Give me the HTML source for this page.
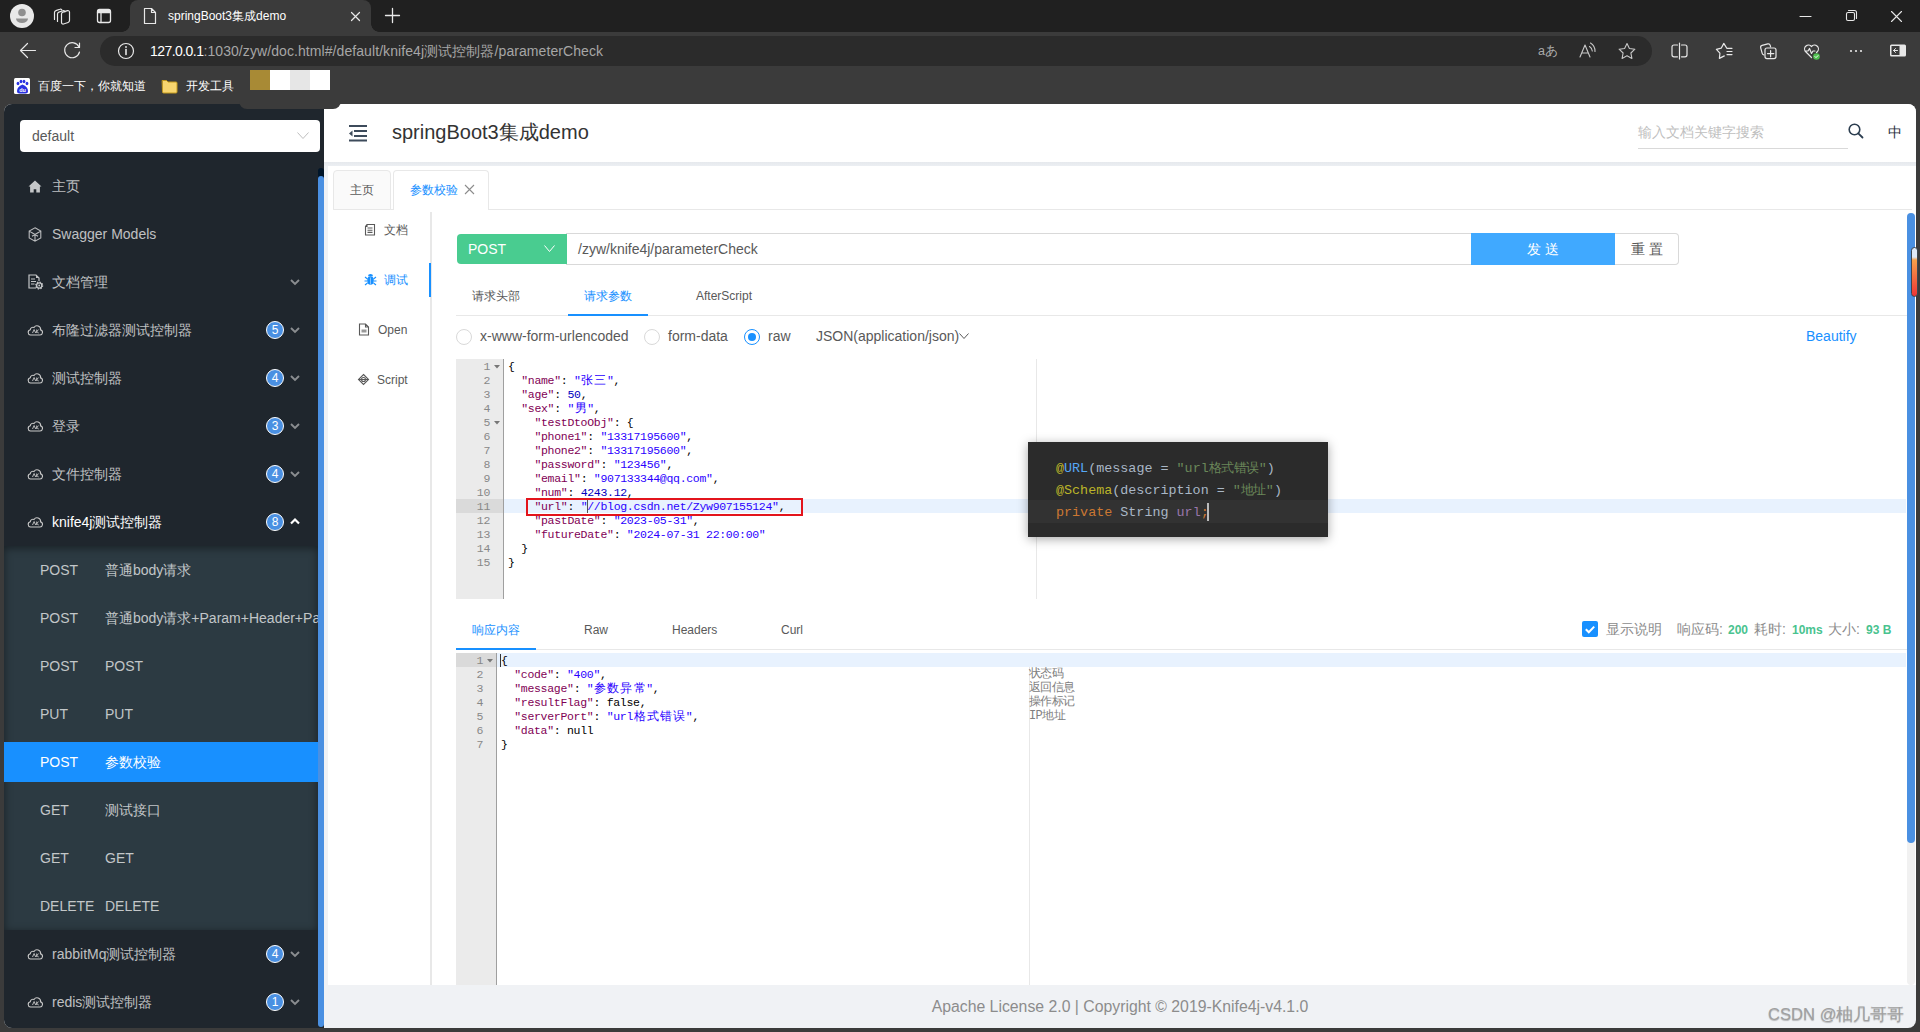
<!DOCTYPE html><html><head><meta charset="utf-8"><style>*{box-sizing:border-box;margin:0;padding:0}
html,body{width:1920px;height:1032px;overflow:hidden;background:#3b3b3b;font-family:"Liberation Sans",sans-serif;position:relative}
.a{position:absolute}
.mono{font-family:"Liberation Mono",monospace}
svg{position:absolute;overflow:visible}
.nw{white-space:nowrap}
/* browser chrome */
#tabstrip{left:0;top:0;width:1920px;height:32px;background:#202020}
#acttab{left:130px;top:0;width:241px;height:32px;background:#3b3b3b;border-radius:8px 8px 0 0}
#acttab:before,#acttab:after{content:"";position:absolute;bottom:0;width:8px;height:8px;background:radial-gradient(circle at 0 0,transparent 8px,#3b3b3b 8.5px)}
#acttab:before{left:-8px;background:radial-gradient(circle at 0 0,#202020 7.5px,#3b3b3b 8px)}
#acttab:after{right:-8px;background:radial-gradient(circle at 100% 0,#202020 7.5px,#3b3b3b 8px)}
#addr{left:100px;top:36px;width:1552px;height:30px;background:#2b2b2b;border-radius:15px}
.ctext{color:#fff;font-size:12px}
/* page */
#page{left:4px;top:104px;width:1912px;height:924px;background:#f0f2f5;border-radius:8px;overflow:hidden}
#side{left:0;top:0;width:320px;height:924px;background:#1f262d}
.mi{position:absolute;left:0;width:314px;height:40px;line-height:40px;font-size:14px;color:rgba(255,255,255,.72)}
.mi .t{position:absolute;left:48px;top:0;white-space:nowrap}
.mi svg{left:24px;top:13px}
.badge{position:absolute;left:262px;top:11px;width:18px;height:18px;border-radius:50%;background:#4a90e2;border:1px solid #fff;color:#fff;font-size:12px;line-height:16px;text-align:center}
.chev{left:287px;top:17px}
.sub{color:rgba(255,255,255,.72)}
.sub .m{position:absolute;left:36px;top:0}
.sub .t{left:101px}
.mono.ln{font-size:11.5px;line-height:14px;color:#888;letter-spacing:-.3px;padding-top:1px;height:14px}
.mono.code{font-size:11.5px;line-height:14px;letter-spacing:-.3px;white-space:pre;padding-top:1px;height:14px}
i.w{font-style:normal;display:inline-block;width:13.2px;text-align:center;letter-spacing:0;font-size:12px;line-height:13px}
.tt{font-size:13.4px;line-height:18px;white-space:pre}
i.w2{font-style:normal;display:inline-block;width:12.5px;text-align:center;font-size:12.5px;line-height:13px}
</style></head><body>
<div id="tabstrip" class="a"></div>
<div id="acttab" class="a"></div>
<div id="addr" class="a"></div>
<svg width="1920" height="104" style="left:0;top:0" fill="none" stroke-linecap="round" stroke-linejoin="round">
  <!-- avatar -->
  <circle cx="22" cy="16" r="12" fill="#e8e8e8"/>
  <circle cx="22" cy="12.5" r="3.8" fill="#8f8f8f"/>
  <path d="M16 18.5 h12 a6 4.5 0 0 1 -12 0z" fill="#8f8f8f"/>
  <!-- workspaces -->
  <g stroke="#e8e8e8" stroke-width="1.2" fill="none">
    <path d="M54.5 19.5 v-7 a2 2 0 0 1 1.4 -1.9 l4 -1.4 a1.5 1.5 0 0 1 2 1"/>
    <path d="M57.5 21.5 v-7.5 a2 2 0 0 1 1.4 -1.9 l4 -1.3 a1.5 1.5 0 0 1 2 1"/>
    <path d="M61.5 14 a2 2 0 0 1 1.4 -1.9 l4.6 -1.5 a1.6 1.6 0 0 1 2 1.5 v8.5 a2 2 0 0 1 -1.4 1.9 l-4.6 1.5 a1.6 1.6 0 0 1 -2 -1.5z"/>
  </g>
  <!-- vertical tabs -->
  <rect x="97.5" y="9.5" width="13" height="13" rx="2" stroke="#e8e8e8" stroke-width="1.3"/>
  <path d="M97.5 12.5 h13 M101 12.5 v10" stroke="#e8e8e8" stroke-width="1.3"/>
  <rect x="98" y="10" width="12" height="2.5" fill="#e8e8e8"/>
  <!-- tab file icon -->
  <path d="M144.5 8.5 h7 l4 4 v11 h-11 z M151.5 8.5 v4 h4" stroke="#e8e8e8" stroke-width="1.2"/>
  <!-- tab close -->
  <path d="M351.5 12.5 l8 8 M359.5 12.5 l-8 8" stroke="#e8e8e8" stroke-width="1.2"/>
  <!-- new tab plus -->
  <path d="M392.5 8.5 v14 M385.5 15.5 h14" stroke="#e8e8e8" stroke-width="1.3"/>
  <!-- window controls -->
  <path d="M1800 16.5 h11" stroke="#e8e8e8" stroke-width="1.1"/>
  <rect x="1846.5" y="12.5" width="8" height="8" rx="1.5" stroke="#e8e8e8" stroke-width="1.1"/>
  <path d="M1848.5 10.5 h6 a2 2 0 0 1 2 2 v6" stroke="#e8e8e8" stroke-width="1.1"/>
  <path d="M1891.5 11.5 l10 10 M1901.5 11.5 l-10 10" stroke="#e8e8e8" stroke-width="1.1"/>
  <!-- back -->
  <path d="M20.5 50.5 h15 M27.5 43.5 l-7 7 l7 7" stroke="#e8e8e8" stroke-width="1.2"/>
  <!-- refresh -->
  <path d="M79 47 A7.5 7.5 0 1 0 79.5 52" stroke="#e8e8e8" stroke-width="1.2"/>
  <path d="M79.5 43 v4.5 h-4.5" stroke="#e8e8e8" stroke-width="1.2"/>
  <!-- info -->
  <circle cx="126" cy="51" r="7.5" stroke="#e8e8e8" stroke-width="1.2"/>
  <path d="M126 49.5 v5" stroke="#e8e8e8" stroke-width="1.6"/>
  <circle cx="126" cy="47" r="0.9" fill="#e8e8e8"/>
  <!-- right toolbar icons -->
  <g stroke="#c8c8c8" stroke-width="1.1">
    <!-- read aloud A -->
    <path d="M1580 57 l5 -12 l5 12 M1582 53 h6"/>
    <path d="M1589.5 46.5 a6 6 0 0 1 2.8 4.5 M1590.5 43 a9.5 9.5 0 0 1 4.5 8.5"/>
    <!-- star -->
    <path d="M1627 43.5 l2.4 5 l5.5 .7 l-4 3.8 l1 5.4 l-4.9 -2.6 l-4.9 2.6 l1 -5.4 l-4 -3.8 l5.5 -.7 z"/>
  </g>
  <g stroke="#e8e8e8" stroke-width="1.2">
    <!-- split screen -->
    <path d="M1677.5 45 h-3.5 a2 2 0 0 0 -2 2 v7.8 a2 2 0 0 0 2 2 h3.5 M1681.5 45 h3.5 a2 2 0 0 1 2 2 v7.8 a2 2 0 0 1 -2 2 h-3.5 M1679.5 43 v16"/>
    <!-- favorites -->
    <path d="M1726.8 48.3 L1723.8 43.4 L1721.2 48.2 L1716.4 49.4 L1719.9 53.2 L1719.4 58.4 L1724.3 55.9 M1727 48.3 h5 M1727 51.5 h5 M1727 54.6 h5"/>
    <!-- collections -->
    <path d="M1763.8 54.8 a2 2 0 0 1 -1.6 -1.5 l-1.5 -5.5 a2 2 0 0 1 1.4 -2.4 l5.7 -1.5 a2 2 0 0 1 2.4 1.4 l.4 1.6"/>
    <rect x="1765" y="48" width="11" height="10.6" rx="2"/>
    <path d="M1770.6 50.5 v6.3 M1767.5 53.6 h6.3"/>
    <!-- health heart -->
    <path d="M1811.5 57.5 l-6 -6 a3.6 3.6 0 0 1 6 -5 a3.6 3.6 0 0 1 6 5 l-1 1 M1805 51 h3 l1.5 -2.5 l2 5 l1.5 -2.5 h2"/>
  </g>
  <circle cx="1816.5" cy="56.5" r="3.3" fill="#4fbf4f"/>
  <path d="M1815 56.6 l1 1 l2 -2" stroke="#fff" stroke-width="1"/>
  <!-- more -->
  <circle cx="1851" cy="51" r="1.1" fill="#e8e8e8"/><circle cx="1856" cy="51" r="1.1" fill="#e8e8e8"/><circle cx="1861" cy="51" r="1.1" fill="#e8e8e8"/>
  <!-- sidebar toggle -->
  <rect x="1890" y="44.5" width="16" height="12" rx="1.5" fill="#e8e8e8"/>
  <rect x="1891.5" y="46" width="8" height="9" fill="#3b3b3b"/>
  <path d="M1897.5 50.5 h-4 M1895.5 48.5 l-2 2 l2 2" stroke="#e8e8e8" stroke-width="1"/>
  <!-- baidu icon -->
  <rect x="14" y="78" width="16" height="16" rx="1.5" fill="#fff"/>
  <g fill="#2932e1">
    <ellipse cx="18" cy="83.5" rx="1.4" ry="1.8"/><ellipse cx="21" cy="81.5" rx="1.4" ry="1.8"/>
    <ellipse cx="24" cy="81.5" rx="1.4" ry="1.8"/><ellipse cx="27" cy="83.5" rx="1.4" ry="1.8"/>
    <path d="M17 91 q0 -4.5 5.5 -6.5 q5.5 2 5.5 6.5 q0 2.5 -2.5 2.5 h-6 q-2.5 0 -2.5 -2.5z"/>
  </g>
  <!-- folder -->
  <path d="M162.5 80.5 h4 l1.5 1.5 h8 a1 1 0 0 1 1 1 v9 a1 1 0 0 1 -1 1 h-12.5 a1 1 0 0 1 -1 -1z" fill="#f7d56f" stroke="#c49a1c" stroke-width="1"/>
<text x="22.5" y="92.3" font-size="5.5" font-family="Liberation Sans" font-weight="bold" fill="#fff" text-anchor="middle">du</text>
</svg>
<div class="a nw ctext" style="left:168px;top:8px;font-size:12px;line-height:16px;color:#fff">springBoot3集成demo</div>
<div class="a nw" style="left:150px;top:43px;font-size:14px;line-height:16px;color:#a6a6a6;letter-spacing:.08px"><span style="color:#fff;letter-spacing:-.55px">127.0.0.1</span>:1030/zyw/doc.html#/default/knife4j测试控制器/parameterCheck</div>
<div class="a nw" style="left:1538px;top:43px;font-size:12.5px;line-height:16px;color:#aaa;letter-spacing:-.3px">aあ</div>
<div class="a nw" style="left:38px;top:78px;font-size:12px;line-height:16px;color:#fff">百度一下，你就知道</div>
<div class="a nw" style="left:186px;top:78px;font-size:12px;line-height:16px;color:#fff">开发工具</div>
<div class="a" style="left:238.5px;top:68px;width:102px;height:40.5px;background:#3b3b3b;border-radius:0 0 8px 8px;z-index:5"></div>
<div class="a" style="left:250px;top:70px;width:80px;height:20px;z-index:6;background:linear-gradient(90deg,#a88a35 0 20px,#fff 20px 40px,#e6e6e6 40px 60px,#fff 60px)"></div>

<div id="page" class="a">
<div id="side" class="a">
<div class="a" style="left:16px;top:16px;width:300px;height:32px;background:#fff;border-radius:4px"></div>
<div class="a nw" style="left:28px;top:24px;font-size:14px;line-height:16px;color:#595959">default</div>
<svg style="left:293px;top:28px" width="12" height="8"><path d="M.5 .5 l5.5 6 l5.5 -6" fill="none" stroke="#bfbfbf" stroke-width="1"/></svg>
<div class="mi" style="top:62px;color:rgba(255,255,255,.72)"><svg width="14" height="13" style="left:24px;top:14px"><path d="M7 .5 l6.5 6 h-1.6 v6 h-3.6 v-3.2 h-2.6 v3.2 h-3.6 v-6 h-1.6z" fill="#c4c6c8"/></svg><span class="t">主页</span>
</div>
<div class="mi" style="top:110px;color:rgba(255,255,255,.72)"><svg width="14" height="15" style="left:24px;top:13px"><path d="M7 .8 l5.8 3.3 v6.8 l-5.8 3.3 l-5.8 -3.3 v-6.8z M1.2 4.1 l5.8 3.4 l5.8 -3.4 M7 7.5 v6.6 M4 5.8 l6 3.5 M10 5.8 l-6 3.5" fill="none" stroke="#b9bbbd" stroke-width="1.1"/></svg><span class="t">Swagger Models</span>
</div>
<div class="mi" style="top:158px;color:rgba(255,255,255,.72)"><svg width="15" height="15" style="left:24px;top:12px"><path d="M8 14 h-7 v-13 h7 l3 3 v3" fill="none" stroke="#c4c6c8" stroke-width="1.2"/><path d="M8 1 v3 h3z" fill="#c4c6c8"/><path d="M3 5 h4 M3 7.5 h5 M3 10 h3.5" stroke="#c4c6c8" stroke-width="1.1"/><circle cx="11.2" cy="11.5" r="2.6" fill="#1f262d" stroke="#c4c6c8" stroke-width="1.3"/><circle cx="11.2" cy="11.5" r="3.4" fill="none" stroke="#c4c6c8" stroke-width="1.3" stroke-dasharray="1.3 1.37"/><circle cx="11.2" cy="11.5" r=".9" fill="#c4c6c8"/></svg><span class="t">文档管理</span>
<svg class="chev" width="10" height="7" style="left:285.5px;top:16.5px"><path d="M1 1 l4 4 l4 -4" fill="none" stroke="#8a8d90" stroke-width="1.9"/></svg>
</div>
<div class="mi" style="top:206px;color:rgba(255,255,255,.72)"><svg width="16" height="12" style="left:23px;top:14px"><path d="M3.5 11 h9.5 a2.6 2.6 0 0 0 .6 -5.1 a3.6 3.6 0 0 0 -6.6 -2.4 a2.6 2.6 0 0 0 -3.7 2.2 a2.7 2.7 0 0 0 .2 5.3z" fill="none" stroke="#c8c8c8" stroke-width="1.1"/><path d="M5.5 9 l1.6 -3.5 l1.6 3.5 M9.7 5.5 v3.5 M9.7 7.5 l2 -2 M9.7 7.5 l2 1.5" fill="none" stroke="#c8c8c8" stroke-width=".9"/></svg><span class="t">布隆过滤器测试控制器</span>
<div class="badge">5</div>
<svg class="chev" width="10" height="7" style="left:285.5px;top:16.5px"><path d="M1 1 l4 4 l4 -4" fill="none" stroke="#8a8d90" stroke-width="1.9"/></svg>
</div>
<div class="mi" style="top:254px;color:rgba(255,255,255,.72)"><svg width="16" height="12" style="left:23px;top:14px"><path d="M3.5 11 h9.5 a2.6 2.6 0 0 0 .6 -5.1 a3.6 3.6 0 0 0 -6.6 -2.4 a2.6 2.6 0 0 0 -3.7 2.2 a2.7 2.7 0 0 0 .2 5.3z" fill="none" stroke="#c8c8c8" stroke-width="1.1"/><path d="M5.5 9 l1.6 -3.5 l1.6 3.5 M9.7 5.5 v3.5 M9.7 7.5 l2 -2 M9.7 7.5 l2 1.5" fill="none" stroke="#c8c8c8" stroke-width=".9"/></svg><span class="t">测试控制器</span>
<div class="badge">4</div>
<svg class="chev" width="10" height="7" style="left:285.5px;top:16.5px"><path d="M1 1 l4 4 l4 -4" fill="none" stroke="#8a8d90" stroke-width="1.9"/></svg>
</div>
<div class="mi" style="top:302px;color:rgba(255,255,255,.72)"><svg width="16" height="12" style="left:23px;top:14px"><path d="M3.5 11 h9.5 a2.6 2.6 0 0 0 .6 -5.1 a3.6 3.6 0 0 0 -6.6 -2.4 a2.6 2.6 0 0 0 -3.7 2.2 a2.7 2.7 0 0 0 .2 5.3z" fill="none" stroke="#c8c8c8" stroke-width="1.1"/><path d="M5.5 9 l1.6 -3.5 l1.6 3.5 M9.7 5.5 v3.5 M9.7 7.5 l2 -2 M9.7 7.5 l2 1.5" fill="none" stroke="#c8c8c8" stroke-width=".9"/></svg><span class="t">登录</span>
<div class="badge">3</div>
<svg class="chev" width="10" height="7" style="left:285.5px;top:16.5px"><path d="M1 1 l4 4 l4 -4" fill="none" stroke="#8a8d90" stroke-width="1.9"/></svg>
</div>
<div class="mi" style="top:350px;color:rgba(255,255,255,.72)"><svg width="16" height="12" style="left:23px;top:14px"><path d="M3.5 11 h9.5 a2.6 2.6 0 0 0 .6 -5.1 a3.6 3.6 0 0 0 -6.6 -2.4 a2.6 2.6 0 0 0 -3.7 2.2 a2.7 2.7 0 0 0 .2 5.3z" fill="none" stroke="#c8c8c8" stroke-width="1.1"/><path d="M5.5 9 l1.6 -3.5 l1.6 3.5 M9.7 5.5 v3.5 M9.7 7.5 l2 -2 M9.7 7.5 l2 1.5" fill="none" stroke="#c8c8c8" stroke-width=".9"/></svg><span class="t">文件控制器</span>
<div class="badge">4</div>
<svg class="chev" width="10" height="7" style="left:285.5px;top:16.5px"><path d="M1 1 l4 4 l4 -4" fill="none" stroke="#8a8d90" stroke-width="1.9"/></svg>
</div>
<div class="mi" style="top:398px;color:#fff"><svg width="16" height="12" style="left:23px;top:14px"><path d="M3.5 11 h9.5 a2.6 2.6 0 0 0 .6 -5.1 a3.6 3.6 0 0 0 -6.6 -2.4 a2.6 2.6 0 0 0 -3.7 2.2 a2.7 2.7 0 0 0 .2 5.3z" fill="none" stroke="#c8c8c8" stroke-width="1.1"/><path d="M5.5 9 l1.6 -3.5 l1.6 3.5 M9.7 5.5 v3.5 M9.7 7.5 l2 -2 M9.7 7.5 l2 1.5" fill="none" stroke="#c8c8c8" stroke-width=".9"/></svg><span class="t">knife4j测试控制器</span>
<div class="badge">8</div>
<svg class="chev" width="10" height="7" style="left:285.5px;top:16px"><path d="M1 5.5 l4 -4 l4 4" fill="none" stroke="#fff" stroke-width="2.2"/></svg>
</div>
<div class="a" style="left:0;top:442px;width:314px;height:384px;background:#2c3a42;box-shadow:inset 0 2px 8px rgba(0,0,0,.45)"></div>
<div class="mi sub" style="top:446px;overflow:hidden"><span class="m">POST</span><span class="t">普通body请求</span></div>
<div class="mi sub" style="top:494px;overflow:hidden"><span class="m">POST</span><span class="t">普通body请求+Param+Header+Path</span></div>
<div class="mi sub" style="top:542px;overflow:hidden"><span class="m">POST</span><span class="t">POST</span></div>
<div class="mi sub" style="top:590px;overflow:hidden"><span class="m">PUT</span><span class="t">PUT</span></div>
<div class="mi sub" style="top:638px;background:#1890ff;color:#fff;overflow:hidden"><span class="m">POST</span><span class="t">参数校验</span></div>
<div class="mi sub" style="top:686px;overflow:hidden"><span class="m">GET</span><span class="t">测试接口</span></div>
<div class="mi sub" style="top:734px;overflow:hidden"><span class="m">GET</span><span class="t">GET</span></div>
<div class="mi sub" style="top:782px;overflow:hidden"><span class="m">DELETE</span><span class="t">DELETE</span></div>
<div class="mi" style="top:830px"><svg width="16" height="12" style="left:23px;top:14px"><path d="M3.5 11 h9.5 a2.6 2.6 0 0 0 .6 -5.1 a3.6 3.6 0 0 0 -6.6 -2.4 a2.6 2.6 0 0 0 -3.7 2.2 a2.7 2.7 0 0 0 .2 5.3z" fill="none" stroke="#c8c8c8" stroke-width="1.1"/><path d="M5.5 9 l1.6 -3.5 l1.6 3.5 M9.7 5.5 v3.5 M9.7 7.5 l2 -2 M9.7 7.5 l2 1.5" fill="none" stroke="#c8c8c8" stroke-width=".9"/></svg><span class="t">rabbitMq测试控制器</span><div class="badge">4</div><svg class="chev" width="10" height="7" style="left:285.5px;top:16.5px"><path d="M1 1 l4 4 l4 -4" fill="none" stroke="#8a8d90" stroke-width="1.9"/></svg></div>
<div class="mi" style="top:878px"><svg width="16" height="12" style="left:23px;top:14px"><path d="M3.5 11 h9.5 a2.6 2.6 0 0 0 .6 -5.1 a3.6 3.6 0 0 0 -6.6 -2.4 a2.6 2.6 0 0 0 -3.7 2.2 a2.7 2.7 0 0 0 .2 5.3z" fill="none" stroke="#c8c8c8" stroke-width="1.1"/><path d="M5.5 9 l1.6 -3.5 l1.6 3.5 M9.7 5.5 v3.5 M9.7 7.5 l2 -2 M9.7 7.5 l2 1.5" fill="none" stroke="#c8c8c8" stroke-width=".9"/></svg><span class="t">redis测试控制器</span><div class="badge">1</div><svg class="chev" width="10" height="7" style="left:285.5px;top:16.5px"><path d="M1 1 l4 4 l4 -4" fill="none" stroke="#8a8d90" stroke-width="1.9"/></svg></div>
<div class="a" style="left:314px;top:64px;width:6px;height:14px;background:#001529;border-radius:3px 3px 0 0"></div>
<div class="a" style="left:314px;top:72px;width:6px;height:851px;background:#4a90e2;border-radius:3px"></div>
</div>
<div class="a" style="left:-4px;top:-104px;width:1920px;height:1032px">
<div class="a" style="left:324px;top:104px;width:1596px;height:58px;background:#fff"></div>
<div class="a" style="left:324px;top:162px;width:1596px;height:4px;background:linear-gradient(#e6e9ed,#eceff3)"></div>
<svg width="20" height="18" style="left:348px;top:124px"><g fill="#3d4b5b"><rect x="1" y="1" width="18" height="2"/><rect x="6" y="6" width="13" height="2"/><rect x="6" y="11" width="13" height="2"/><rect x="1" y="15.5" width="18" height="2"/><path d="M1 9.5 l3.5 -3 v6z"/></g></svg>
<div class="a nw" style="left:392px;top:122px;font-size:20px;line-height:20px;color:#333">springBoot3集成demo</div>
<div class="a nw" style="left:1638px;top:124px;font-size:14px;line-height:16px;color:#bfbfbf">输入文档关键字搜索</div>
<div class="a" style="left:1638px;top:148px;width:210px;height:1px;background:#d9d9d9"></div>
<svg width="16" height="16" style="left:1848px;top:123px"><circle cx="6.5" cy="6.5" r="5.3" fill="none" stroke="#2c3e50" stroke-width="1.6"/><path d="M10.3 10.3 l4.2 4.2" stroke="#2c3e50" stroke-width="1.8" stroke-linecap="round"/></svg>
<div class="a nw" style="left:1888px;top:124px;font-size:14px;line-height:16px;color:#1f2d3d">中</div>
<div class="a" style="left:328px;top:166px;width:1592px;height:819px;background:#fff"></div>
<div class="a" style="left:333px;top:209px;width:1579px;height:1px;background:#e8e8e8"></div>
<div class="a" style="left:333px;top:170px;width:58px;height:40px;background:#fafafa;border:1px solid #e8e8e8;border-radius:4px 4px 0 0"></div>
<div class="a" style="left:393px;top:170px;width:96px;height:40px;background:#fff;border:1px solid #e8e8e8;border-bottom:0;border-radius:4px 4px 0 0"></div>
<div class="a nw" style="left:350px;top:182px;font-size:12px;line-height:16px;color:#595959">主页</div>
<div class="a nw" style="left:410px;top:182px;font-size:12px;line-height:16px;color:#1890ff">参数校验</div>
<svg width="12" height="12" style="left:464px;top:184px"><path d="M1 1 l9 9 M10 1 l-9 9" stroke="#8c8c8c" stroke-width="1.1"/></svg>
<div class="a" style="left:430px;top:212px;width:2px;height:773px;background:#e8e8e8"></div>
<div class="a" style="left:429px;top:263px;width:2px;height:34px;background:#1890ff"></div>
<svg width="12" height="13" style="left:364px;top:223px"><path d="M3 1.5 h7.5 v10.5 h-9 v-8.5z M3 1.5 v2 h-1.5 M3.5 5 h5 M3.5 7.2 h5 M3.5 9.4 h5" fill="none" stroke="#595959" stroke-width="1.1"/></svg>
<div class="a nw" style="left:384px;top:222px;font-size:12px;line-height:16px;color:#595959">文档</div>
<svg width="13" height="13" style="left:364px;top:273px"><g fill="#1890ff"><ellipse cx="6.5" cy="7.5" rx="3.3" ry="4.3"/><path d="M4 3.2 a2.5 2.2 0 0 1 5 0z"/></g><path d="M1 4 l2.5 2 M12 4 l-2.5 2 M0.5 8 h2.5 M12.5 8 h-2.5 M1 12 l2.5 -2 M12 12 l-2.5 -2" stroke="#1890ff" stroke-width="1.1"/><path d="M6.5 4.5 v7" stroke="#9fd0ff" stroke-width=".8"/></svg>
<div class="a nw" style="left:384px;top:272px;font-size:12px;line-height:16px;color:#1890ff">调试</div>
<svg width="12" height="13" style="left:358px;top:323px"><path d="M1.5 1 h6 l3 3 v8 h-9z M7.5 1 v3 h3" fill="none" stroke="#595959" stroke-width="1.1"/><rect x="3.5" y="6.5" width="5" height="3" fill="#999"/></svg>
<div class="a nw" style="left:378px;top:322px;font-size:12px;line-height:16px;color:#595959">Open</div>
<svg width="13" height="13" style="left:357px;top:373px"><path d="M6.5 1.5 l5 5 l-5 5 l-5 -5z" fill="none" stroke="#595959" stroke-width="1.1"/><circle cx="6.5" cy="6.5" r="2" fill="none" stroke="#595959" stroke-width="1.1"/><path d="M1.5 6.5 h10" stroke="#595959" stroke-width="1"/></svg>
<div class="a nw" style="left:377px;top:372px;font-size:12px;line-height:16px;color:#595959">Script</div>
<div class="a" style="left:457px;top:234px;width:110px;height:30px;background:#49cc90;border-radius:4px 0 0 4px"></div>
<div class="a nw" style="left:468px;top:241px;font-size:14px;line-height:16px;color:#fff">POST</div>
<svg width="12" height="8" style="left:544px;top:245px"><path d="M.5 .5 l5 6 l5 -6" fill="none" stroke="#fff" stroke-width="1"/></svg>
<div class="a" style="left:566px;top:233px;width:906px;height:32px;border:1px solid #d9d9d9;border-left:0"></div>
<div class="a nw" style="left:578px;top:241px;font-size:14px;line-height:16px;color:#595959">/zyw/knife4j/parameterCheck</div>
<div class="a" style="left:1471px;top:233px;width:144px;height:32px;background:#40a9ff"></div>
<div class="a nw" style="left:1527px;top:241px;font-size:14px;line-height:16px;color:#fff;letter-spacing:4px">发送</div>
<div class="a" style="left:1615px;top:233px;width:64px;height:32px;border:1px solid #d9d9d9;border-left:0;border-radius:0 4px 4px 0;background:#fff"></div>
<div class="a nw" style="left:1631px;top:241px;font-size:14px;line-height:16px;color:#595959;letter-spacing:4px">重置</div>
<div class="a" style="left:456px;top:315px;width:1451px;height:1px;background:#e8e8e8"></div>
<div class="a" style="left:568px;top:314px;width:80px;height:2px;background:#1890ff"></div>
<div class="a nw" style="left:472px;top:288px;font-size:12px;line-height:16px;color:#595959">请求头部</div>
<div class="a nw" style="left:584px;top:288px;font-size:12px;line-height:16px;color:#1890ff">请求参数</div>
<div class="a nw" style="left:696px;top:288px;font-size:12px;line-height:16px;color:#595959">AfterScript</div>
<svg width="16" height="16" style="left:456px;top:329px"><circle cx="8" cy="8" r="7.5" fill="#fff" stroke="#d9d9d9" stroke-width="1"/></svg>
<svg width="16" height="16" style="left:644px;top:329px"><circle cx="8" cy="8" r="7.5" fill="#fff" stroke="#d9d9d9" stroke-width="1"/></svg>
<svg width="16" height="16" style="left:744px;top:329px"><circle cx="8" cy="8" r="7.5" fill="#fff" stroke="#1890ff" stroke-width="1"/><circle cx="8" cy="8" r="4" fill="#1890ff"/></svg>
<div class="a nw" style="left:480px;top:328px;font-size:14px;line-height:16px;color:#595959">x-www-form-urlencoded</div>
<div class="a nw" style="left:668px;top:328px;font-size:14px;line-height:16px;color:#595959">form-data</div>
<div class="a nw" style="left:768px;top:328px;font-size:14px;line-height:16px;color:#595959">raw</div>
<div class="a nw" style="left:816px;top:328px;font-size:14px;line-height:16px;color:#595959">JSON(application/json)</div>
<svg width="11" height="7" style="left:959px;top:333px"><path d="M.5 .5 l4.5 5 l4.5 -5" fill="none" stroke="#595959" stroke-width="1"/></svg>
<div class="a nw" style="left:1806px;top:328px;font-size:14px;line-height:16px;color:#1890ff">Beautify</div>
<div class="a" style="left:456px;top:359px;width:1450px;height:240px;background:#fff;overflow:hidden">
<div class="a" style="left:0;top:0;width:48px;height:240px;background:#ebebeb;border-right:1px solid #9f9f9f"></div>
<div class="a" style="left:580px;top:0;width:1px;height:240px;background:#e8e8e8"></div>
<div class="a" style="left:0;top:140px;width:47px;height:14px;background:#dadada"></div>
<div class="a" style="left:48px;top:140px;width:1402px;height:14px;background:#e8f2fe"></div>
<div class="a mono ln" style="left:0;top:0px;width:34px;text-align:right">1</div>
<svg width="6" height="4" style="left:38px;top:6px"><path d="M0 0 h6 l-3 3.5z" fill="#777"/></svg>
<div class="a mono code" style="left:52px;top:0px"><span style="color:#000">{</span></div>
<div class="a mono ln" style="left:0;top:14px;width:34px;text-align:right">2</div>
<div class="a mono code" style="left:52px;top:14px"><span style="color:#000">  </span><span style="color:#7f0055">&quot;name&quot;</span><span style="color:#000">: </span><span style="color:#2a00ff">&quot;<i class="w">张</i><i class="w">三</i>&quot;</span><span style="color:#000">,</span></div>
<div class="a mono ln" style="left:0;top:28px;width:34px;text-align:right">3</div>
<div class="a mono code" style="left:52px;top:28px"><span style="color:#000">  </span><span style="color:#7f0055">&quot;age&quot;</span><span style="color:#000">: </span><span style="color:#0000c0">50</span><span style="color:#000">,</span></div>
<div class="a mono ln" style="left:0;top:42px;width:34px;text-align:right">4</div>
<div class="a mono code" style="left:52px;top:42px"><span style="color:#000">  </span><span style="color:#7f0055">&quot;sex&quot;</span><span style="color:#000">: </span><span style="color:#2a00ff">&quot;<i class="w">男</i>&quot;</span><span style="color:#000">,</span></div>
<div class="a mono ln" style="left:0;top:56px;width:34px;text-align:right">5</div>
<svg width="6" height="4" style="left:38px;top:62px"><path d="M0 0 h6 l-3 3.5z" fill="#777"/></svg>
<div class="a mono code" style="left:52px;top:56px"><span style="color:#000">    </span><span style="color:#7f0055">&quot;testDtoObj&quot;</span><span style="color:#000">: </span><span style="color:#000">{</span></div>
<div class="a mono ln" style="left:0;top:70px;width:34px;text-align:right">6</div>
<div class="a mono code" style="left:52px;top:70px"><span style="color:#000">    </span><span style="color:#7f0055">&quot;phone1&quot;</span><span style="color:#000">: </span><span style="color:#2a00ff">&quot;13317195600&quot;</span><span style="color:#000">,</span></div>
<div class="a mono ln" style="left:0;top:84px;width:34px;text-align:right">7</div>
<div class="a mono code" style="left:52px;top:84px"><span style="color:#000">    </span><span style="color:#7f0055">&quot;phone2&quot;</span><span style="color:#000">: </span><span style="color:#2a00ff">&quot;13317195600&quot;</span><span style="color:#000">,</span></div>
<div class="a mono ln" style="left:0;top:98px;width:34px;text-align:right">8</div>
<div class="a mono code" style="left:52px;top:98px"><span style="color:#000">    </span><span style="color:#7f0055">&quot;password&quot;</span><span style="color:#000">: </span><span style="color:#2a00ff">&quot;123456&quot;</span><span style="color:#000">,</span></div>
<div class="a mono ln" style="left:0;top:112px;width:34px;text-align:right">9</div>
<div class="a mono code" style="left:52px;top:112px"><span style="color:#000">    </span><span style="color:#7f0055">&quot;email&quot;</span><span style="color:#000">: </span><span style="color:#2a00ff">&quot;907133344@qq.com&quot;</span><span style="color:#000">,</span></div>
<div class="a mono ln" style="left:0;top:126px;width:34px;text-align:right">10</div>
<div class="a mono code" style="left:52px;top:126px"><span style="color:#000">    </span><span style="color:#7f0055">&quot;num&quot;</span><span style="color:#000">: </span><span style="color:#0000c0">4243.12</span><span style="color:#000">,</span></div>
<div class="a mono ln" style="left:0;top:140px;width:34px;text-align:right">11</div>
<div class="a mono code" style="left:52px;top:140px"><span style="color:#000">    </span><span style="color:#7f0055">&quot;url&quot;</span><span style="color:#000">: </span><span style="color:#2a00ff">&quot;//blog.csdn.net/Zyw907155124&quot;</span><span style="color:#000">,</span></div>
<div class="a mono ln" style="left:0;top:154px;width:34px;text-align:right">12</div>
<div class="a mono code" style="left:52px;top:154px"><span style="color:#000">    </span><span style="color:#7f0055">&quot;pastDate&quot;</span><span style="color:#000">: </span><span style="color:#2a00ff">&quot;2023-05-31&quot;</span><span style="color:#000">,</span></div>
<div class="a mono ln" style="left:0;top:168px;width:34px;text-align:right">13</div>
<div class="a mono code" style="left:52px;top:168px"><span style="color:#000">    </span><span style="color:#7f0055">&quot;futureDate&quot;</span><span style="color:#000">: </span><span style="color:#2a00ff">&quot;2024-07-31 22:00:00&quot;</span><span style="color:#000"></span></div>
<div class="a mono ln" style="left:0;top:182px;width:34px;text-align:right">14</div>
<div class="a mono code" style="left:52px;top:182px"><span style="color:#000">  </span><span style="color:#000">}</span></div>
<div class="a mono ln" style="left:0;top:196px;width:34px;text-align:right">15</div>
<div class="a mono code" style="left:52px;top:196px"><span style="color:#000">}</span></div>
</div>
<div class="a" style="left:526px;top:498px;width:277px;height:18px;border:2.5px solid #e3141c"></div>
<div class="a" style="left:587px;top:500px;width:1px;height:13px;background:#555"></div>
<div class="a" style="left:456px;top:649px;width:1451px;height:1px;background:#e8e8e8"></div>
<div class="a" style="left:456px;top:648px;width:80px;height:2px;background:#1890ff"></div>
<div class="a nw" style="left:472px;top:622px;font-size:12px;line-height:16px;color:#1890ff">响应内容</div>
<div class="a nw" style="left:584px;top:622px;font-size:12px;line-height:16px;color:#595959">Raw</div>
<div class="a nw" style="left:672px;top:622px;font-size:12px;line-height:16px;color:#595959">Headers</div>
<div class="a nw" style="left:781px;top:622px;font-size:12px;line-height:16px;color:#595959">Curl</div>
<div class="a" style="left:1582px;top:621px;width:16px;height:16px;background:#1890ff;border-radius:2px"></div>
<svg width="16" height="16" style="left:1582px;top:621px"><path d="M3.8 8.2 l3 3 l5.4 -5.6" fill="none" stroke="#fff" stroke-width="2"/></svg>
<div class="a nw" style="left:1606px;top:621px;font-size:14px;line-height:16px;color:#8c8c8c">显示说明</div>
<div class="a nw" style="left:1677px;top:621px;font-size:14px;line-height:16px;color:#8c8c8c">响应码:</div>
<div class="a nw" style="left:1728px;top:622px;font-size:12px;line-height:16px;color:#49c38f;font-weight:bold">200</div>
<div class="a nw" style="left:1754px;top:621px;font-size:14px;line-height:16px;color:#8c8c8c">耗时:</div>
<div class="a nw" style="left:1792px;top:622px;font-size:12px;line-height:16px;color:#49c38f;font-weight:bold">10ms</div>
<div class="a nw" style="left:1828px;top:621px;font-size:14px;line-height:16px;color:#8c8c8c">大小:</div>
<div class="a nw" style="left:1866px;top:622px;font-size:12px;line-height:16px;color:#49c38f;font-weight:bold">93 B</div>
<div class="a" style="left:456px;top:653px;width:1450px;height:332px;background:#fff;overflow:hidden">
<div class="a" style="left:0;top:0;width:41px;height:332px;background:#ebebeb;border-right:1px solid #9f9f9f"></div>
<div class="a" style="left:573px;top:0;width:1px;height:332px;background:#e8e8e8"></div>
<div class="a" style="left:0;top:0px;width:40px;height:14px;background:#dadada"></div>
<div class="a" style="left:41px;top:0px;width:1409px;height:14px;background:#e8f2fe"></div>
<div class="a mono ln" style="left:0;top:0px;width:27px;text-align:right">1</div>
<svg width="6" height="4" style="left:31px;top:6px"><path d="M0 0 h6 l-3 3.5z" fill="#777"/></svg>
<div class="a mono code" style="left:45px;top:0px"><span style="color:#000">{</span></div>
<div class="a mono ln" style="left:0;top:14px;width:27px;text-align:right">2</div>
<div class="a mono code" style="left:45px;top:14px"><span style="color:#000">  </span><span style="color:#7f0055">&quot;code&quot;</span><span style="color:#000">: </span><span style="color:#2a00ff">&quot;400&quot;</span><span style="color:#000">,</span></div>
<div class="a mono ln" style="left:0;top:28px;width:27px;text-align:right">3</div>
<div class="a mono code" style="left:45px;top:28px"><span style="color:#000">  </span><span style="color:#7f0055">&quot;message&quot;</span><span style="color:#000">: </span><span style="color:#2a00ff">&quot;<i class="w">参</i><i class="w">数</i><i class="w">异</i><i class="w">常</i>&quot;</span><span style="color:#000">,</span></div>
<div class="a mono ln" style="left:0;top:42px;width:27px;text-align:right">4</div>
<div class="a mono code" style="left:45px;top:42px"><span style="color:#000">  </span><span style="color:#7f0055">&quot;resultFlag&quot;</span><span style="color:#000">: </span><span style="color:#000">false,</span></div>
<div class="a mono ln" style="left:0;top:56px;width:27px;text-align:right">5</div>
<div class="a mono code" style="left:45px;top:56px"><span style="color:#000">  </span><span style="color:#7f0055">&quot;serverPort&quot;</span><span style="color:#000">: </span><span style="color:#2a00ff">&quot;url<i class="w">格</i><i class="w">式</i><i class="w">错</i><i class="w">误</i>&quot;</span><span style="color:#000">,</span></div>
<div class="a mono ln" style="left:0;top:70px;width:27px;text-align:right">6</div>
<div class="a mono code" style="left:45px;top:70px"><span style="color:#000">  </span><span style="color:#7f0055">&quot;data&quot;</span><span style="color:#000">: </span><span style="color:#000">null</span></div>
<div class="a mono ln" style="left:0;top:84px;width:27px;text-align:right">7</div>
<div class="a mono code" style="left:45px;top:84px"><span style="color:#000">}</span></div>
</div>
<div class="a" style="left:500px;top:654px;width:1px;height:13px;background:#333"></div>
<div class="a nw" style="left:1029px;top:667px;font-size:12px;line-height:14px;color:#808080;font-family:'Liberation Mono',monospace;letter-spacing:-.6px">状态码</div>
<div class="a nw" style="left:1029px;top:681px;font-size:12px;line-height:14px;color:#808080;font-family:'Liberation Mono',monospace;letter-spacing:-.6px">返回信息</div>
<div class="a nw" style="left:1029px;top:695px;font-size:12px;line-height:14px;color:#808080;font-family:'Liberation Mono',monospace;letter-spacing:-.6px">操作标记</div>
<div class="a nw" style="left:1029px;top:709px;font-size:12px;line-height:14px;color:#808080;font-family:'Liberation Mono',monospace;letter-spacing:-.6px">IP地址</div>
<div class="a" style="left:1907px;top:213px;width:8px;height:772px;background:#f1f1f1;border-radius:4px"></div>
<div class="a" style="left:1907px;top:213px;width:8px;height:630px;background:#4a90e2;border-radius:4px"></div>
<div class="a nw" style="left:324px;top:997px;width:1592px;text-align:center;font-size:15.8px;line-height:20px;color:#8c8c8c">Apache License 2.0 | Copyright © 2019-Knife4j-v4.1.0</div>
</div>
</div>
<div class="a" style="left:1028px;top:442px;width:300px;height:95px;background:#2b2b2b;box-shadow:0 2px 10px rgba(0,0,0,.35);z-index:10">
<div class="a" style="left:0;top:58px;width:300px;height:23px;background:#323232"></div>
<div class="a mono nw tt" style="left:28px;top:18px"><span style="color:#bbb529">@</span><span style="color:#56a8f5">URL</span><span style="color:#a9b7c6">(</span><span style="color:#a9b7c6">message</span><span style="color:#a9b7c6"> = </span><span style="color:#6a8759">"url</span><span style="color:#6a8759"><i class="w2">格</i><i class="w2">式</i><i class="w2">错</i><i class="w2">误</i></span><span style="color:#6a8759">"</span><span style="color:#a9b7c6">)</span></div>
<div class="a mono nw tt" style="left:28px;top:40px"><span style="color:#bbb529">@Schema</span><span style="color:#a9b7c6">(</span><span style="color:#a9b7c6">description</span><span style="color:#a9b7c6"> = </span><span style="color:#6a8759">"</span><span style="color:#6a8759"><i class="w2">地</i><i class="w2">址</i></span><span style="color:#6a8759">"</span><span style="color:#a9b7c6">)</span></div>
<div class="a mono nw tt" style="left:28px;top:62px"><span style="color:#cc7832">private</span><span style="color:#a9b7c6"> </span><span style="color:#a9b7c6">String</span><span style="color:#a9b7c6"> </span><span style="color:#9876aa">url</span><span style="color:#cc7832">;</span></div>
<div class="a" style="left:179px;top:61px;width:2px;height:18px;background:#bbbbbb"></div>
</div>
<div class="a nw" style="left:1768px;top:1005px;font-size:16.6px;line-height:20px;color:#a0a0a0;text-shadow:0 .5px 1px rgba(0,0,0,.25);z-index:11">CSDN @柚几哥哥</div>
<div class="a" style="left:1911px;top:247px;width:7px;height:50px;border:1.5px solid #3d4750;border-radius:3.5px;background:linear-gradient(#dfe9f7 0 9px,#f7a04a 12px,#ee3535);z-index:9"></div>
</body></html>
